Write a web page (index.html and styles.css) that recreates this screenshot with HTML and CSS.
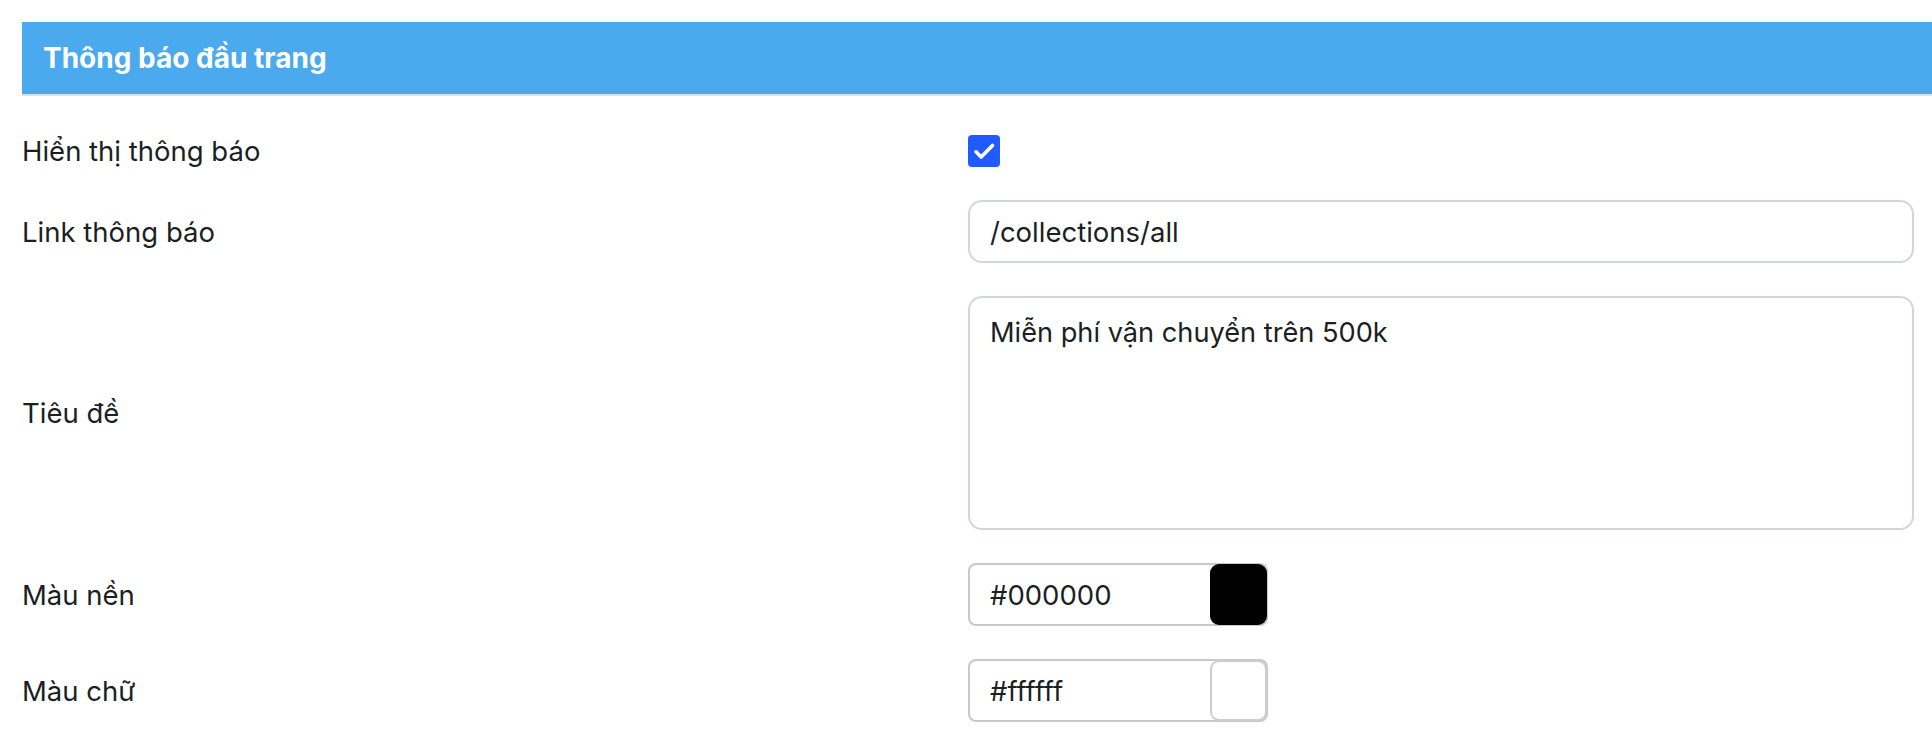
FILE: index.html
```html
<!DOCTYPE html>
<html lang="vi">
<head>
<meta charset="utf-8">
<title>Thông báo đầu trang</title>
<link rel="stylesheet" href="styles.css">
</head>
<body>
<div class="panel">
  <div class="panel-header">Thông báo đầu trang</div>
  <div class="form">
    <div class="row row-check">
      <label class="label">Hiển thị thông báo</label>
      <div class="control">
        <span class="checkbox">
          <svg viewBox="0 0 32 32" width="32" height="32" aria-hidden="true"><path d="M8 16.8l5.2 5.2L24.5 10.5" fill="none" stroke="#fff" stroke-width="3.6" stroke-linecap="round" stroke-linejoin="round"/></svg>
        </span>
      </div>
    </div>
    <div class="row">
      <label class="label">Link thông báo</label>
      <div class="control">
        <div class="input">/collections/all</div>
      </div>
    </div>
    <div class="row">
      <label class="label">Tiêu đề</label>
      <div class="control">
        <div class="textarea">Miễn phí vận chuyển trên 500k</div>
      </div>
    </div>
    <div class="row">
      <label class="label">Màu nền</label>
      <div class="control">
        <div class="color-input">
          <span class="color-text">#000000</span>
          <span class="swatch swatch-black"></span>
        </div>
      </div>
    </div>
    <div class="row">
      <label class="label">Màu chữ</label>
      <div class="control">
        <div class="color-input">
          <span class="color-text">#ffffff</span>
          <span class="swatch swatch-white"></span>
        </div>
      </div>
    </div>
  </div>
</div>
</body>
</html>
```

FILE: styles.css
```css
* { box-sizing: border-box; }

html, body {
  margin: 0;
  padding: 0;
  background: #ffffff;
  overflow: hidden;
}

body {
  font-family: Inter, "Noto Sans", "Liberation Sans", sans-serif;
  color: #1b1f24;
  padding: 22px 18px 0 22px;
}

.panel-header {
  margin-right: -18px;
  height: 74px;
  background: #4aaaed;
  border-bottom: 2px solid #dde2e8;
  color: #ffffff;
  font-weight: 700;
  font-size: 28px;
  display: flex;
  align-items: center;
  padding-left: 21px;
}

.form {
  display: flex;
  flex-direction: column;
  gap: 33px;
  padding-top: 38px;
}

.row {
  display: grid;
  grid-template-columns: 1fr 1fr;
  align-items: center;
}

.row-check {
  height: 33px;
}

.label {
  font-size: 27.5px;
  line-height: 32px;
}

.control {
  display: flex;
  align-items: center;
}

.checkbox {
  width: 32px;
  height: 32px;
  border-radius: 4px;
  background: #1f5bff;
  display: inline-flex;
}

.input,
.textarea {
  width: 100%;
  border: 2px solid #d2d6dc;
  border-radius: 14px;
  font-size: 27.5px;
  padding: 0 20px;
}

.input {
  height: 63px;
  display: flex;
  align-items: center;
}

.textarea {
  height: 234px;
  padding-top: 17px;
  line-height: 1.35;
  font-size: 27.2px;
}

.color-input {
  width: 300px;
  height: 63px;
  border: 2px solid #c9c9c9;
  border-radius: 8px;
  display: flex;
  align-items: center;
  justify-content: space-between;
  padding-left: 20px;
  font-size: 27.5px;
}

.swatch {
  width: 57px;
  height: 61px;
  border-radius: 9px;
  margin-right: -1px;
}

.swatch-black {
  background: #000000;
}

.swatch-white {
  background: #ffffff;
  border: 2px solid #cdcdcd;
}
```
